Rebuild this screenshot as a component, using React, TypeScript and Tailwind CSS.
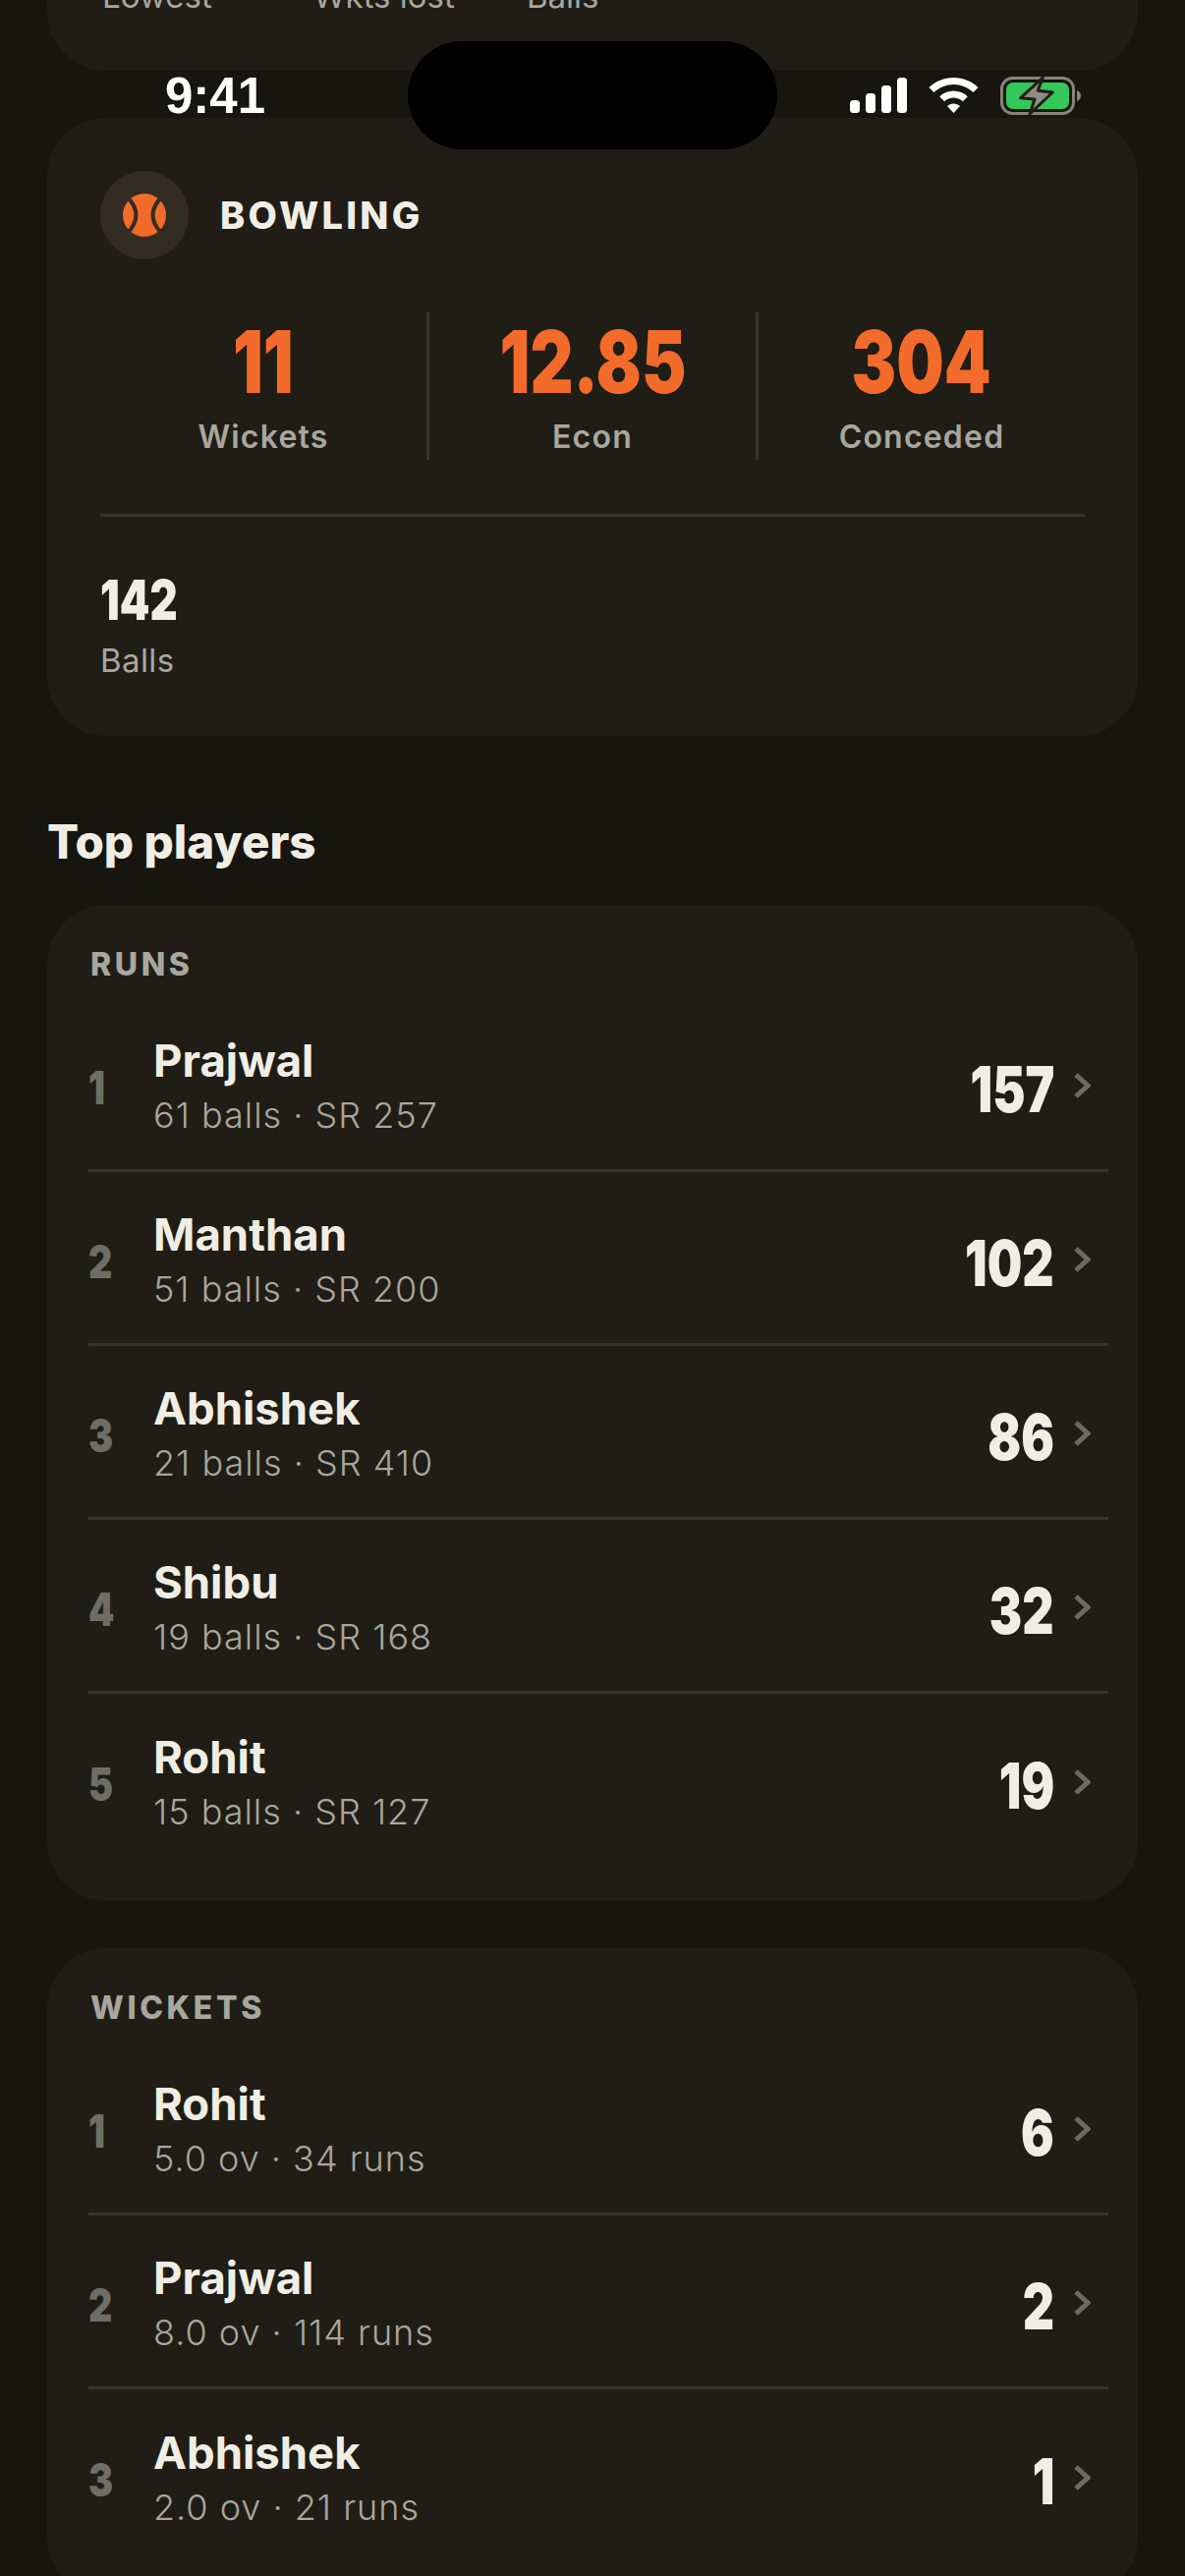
const runs = [
  { name: "Prajwal", sub: "61 balls · SR 257", score: "157" },
  { name: "Manthan", sub: "51 balls · SR 200", score: "102" },
  { name: "Abhishek", sub: "21 balls · SR 410", score: "86" },
  { name: "Shibu", sub: "19 balls · SR 168", score: "32" },
  { name: "Rohit", sub: "15 balls · SR 127", score: "19" },
];

const wickets = [
  { name: "Rohit", sub: "5.0 ov · 34 runs", score: "6" },
  { name: "Prajwal", sub: "8.0 ov · 114 runs", score: "2" },
  { name: "Abhishek", sub: "2.0 ov · 21 runs", score: "1" },
];

const bowling = [
  { value: "11", label: "Wickets" },
  { value: "12.85", label: "Econ" },
  { value: "304", label: "Conceded" },
];

function StatusBar() {
  return (
    <div className="absolute inset-x-0 top-0 h-[152px]">
      <div className="absolute left-[415px] top-[42px] h-[110px] w-[376px] rounded-[55px] bg-black" />
      <span className="absolute left-[168px] top-[68px] text-[51px] leading-[60px] font-semibold text-white font-['Liberation_Sans',sans-serif]">
        9:41
      </span>
      {/* signal */}
      <svg className="absolute left-[865px] top-[79px]" width="58" height="36" viewBox="0 0 58 36" fill="#fff">
        <rect x="0" y="23" width="10" height="13" rx="3.5" />
        <rect x="16" y="16" width="10" height="20" rx="3.5" />
        <rect x="32" y="8" width="10" height="28" rx="3.5" />
        <rect x="48" y="0" width="10" height="36" rx="3.5" />
      </svg>
      {/* wifi */}
      <svg className="absolute left-[945px] top-[79px]" width="51" height="36" viewBox="0 0 51 36" fill="#fff">
        <path d="M25.5 0C35 0 44 3.7 50.5 10L45.5 15C40.2 10 33 7 25.5 7S10.8 10 5.5 15L.5 10C7 3.7 16 0 25.5 0Z" />
        <path d="M25.5 13.5C31 13.5 36 15.6 39.8 19.2L34.8 24.2C32.3 22 29 20.6 25.5 20.6S18.7 22 16.2 24.2L11.2 19.2C15 15.6 20 13.5 25.5 13.5Z" />
        <path d="M25.5 26.5C28 26.5 30.3 27.4 32 29L25.5 36L19 29C20.7 27.4 23 26.5 25.5 26.5Z" />
      </svg>
      {/* battery charging */}
      <svg className="absolute left-[1018px] top-[78px]" width="84" height="40" viewBox="0 0 84 40">
        <rect x="1.5" y="1.5" width="73" height="36" rx="11" fill="none" stroke="#85847c" strokeWidth="3" />
        <rect x="6" y="6" width="64" height="27" rx="7" fill="#34c759" />
        <path d="M78 14C81 15 82 17 82 19.5S81 24 78 25Z" fill="#85847c" />
        <path d="M43.3 1L20.7 21.7L35 23L30 38L53.3 16L38.3 14.3Z" fill="#8d8c84" stroke="#1f1d16" strokeWidth="3" strokeLinejoin="round" />
      </svg>
    </div>
  );
}

function BallIcon() {
  return (
    <div className="flex h-[90px] w-[90px] items-center justify-center rounded-full bg-[#332c22]">
      <svg width="44" height="44" viewBox="0 0 44 44" fill="none">
        <circle cx="22" cy="22" r="22" fill="#f26b2a" />
        <path d="M4 3Q23 22 4 41M40 3Q21 22 40 41" stroke="#332c22" strokeWidth="4" />
      </svg>
    </div>
  );
}

function PlayerCard({ title, rows, className = "" }: { title: string; rows: typeof runs; className?: string }) {
  return (
    <div className={`rounded-[60px] bg-[#1f1d16] pt-[41px] pr-[30px] pb-[34px] pl-[42px] ${className}`}>
      <div className="mb-[14px] pl-[2px] text-[32px] leading-[40px] font-extrabold tracking-[3.6px] text-[#a8a79d]">{title}</div>
      {rows.map((row, i) => (
        <div
          key={row.name}
          className={`flex h-[177px] items-center ${i < rows.length - 1 ? "border-b-[3px] border-[#37352a]" : ""}`}
        >
          <div className="w-[66px] pt-[6px]">
            <span className="inline-block origin-left scale-x-[.8] text-[47px] leading-none font-black text-[#6e6e66]">
              {i + 1}
            </span>
          </div>
          <div className="min-w-0 flex-1 pt-[5px]">
            <div className="text-[45.5px] leading-[56px] font-bold text-[#f0eee4]">{row.name}</div>
            <div className="mt-[2px] text-[36px] leading-[50px] font-light tracking-[1px] text-[#a8a79d]">{row.sub}</div>
          </div>
          <span className="inline-block origin-right scale-x-[.77] pt-[10px] text-[65px] leading-none font-black text-[#f0eee4]">
            {row.score}
          </span>
          <svg className="mt-[3px] mr-[18px] ml-[20px]" width="17" height="26" viewBox="0 0 17 26" fill="none">
            <path d="M2 2L14 13L2 24" stroke="#6b6b63" strokeWidth="5" />
          </svg>
        </div>
      ))}
    </div>
  );
}

export default function App() {
  return (
    <div className="relative h-[2622px] w-[1206px] overflow-hidden bg-[#16150f] font-['Inter',sans-serif]">
      <div className="mx-[48px] flex h-[72px] items-start overflow-hidden rounded-b-[60px] bg-[#1f1d16] pl-[56px]">
        <span className="-mt-[24px] w-[215px] text-[33px] leading-[40px] text-[#a8a79d]">Lowest</span>
        <span className="-mt-[24px] w-[217px] text-[33px] leading-[40px] text-[#a8a79d]">Wkts lost</span>
        <span className="-mt-[24px] text-[33px] leading-[40px] text-[#a8a79d]">Balls</span>
      </div>

      <div className="mx-[48px] mt-[48px] h-[629px] rounded-[60px] bg-[#1f1d16] px-[54px] pt-[54px]">
        <div className="flex items-center gap-[32px]">
          <BallIcon />
          <span className="text-[38px] font-extrabold tracking-[3.3px] text-[#f0eee4]">BOWLING</span>
        </div>
        <div className="mt-[54px] grid h-[150px] grid-cols-[335px_335px_1fr]">
          {bowling.map((stat, i) => (
            <div
              key={stat.label}
              className={`flex flex-col items-center ${i < 2 ? "border-r-[3px] border-[#37352a]" : ""}`}
            >
              <span className="mt-[4px] inline-block scale-x-[.775] text-[88px] leading-[92px] font-black text-[#f26b2a]">
                {stat.value}
              </span>
              <span className="mt-[11px] text-[32px] leading-[40px] font-semibold tracking-[1.2px] text-[#a8a79d]">
                {stat.label}
              </span>
            </div>
          ))}
        </div>
        <div className="mt-[55px] h-[3px] bg-[#37352a]" />
        <div className="mt-[52px] text-[56px] leading-[66px]">
          <span className="inline-block origin-left scale-x-[.78] font-black text-[#f0eee4]">142</span>
        </div>
        <div className="mt-[8px] text-[33px] leading-[40px] tracking-[.4px] text-[#a8a79d]">Balls</div>
      </div>

      <h2 className="mx-[48px] mt-[78px] text-[47.5px] leading-[60px] font-extrabold text-[#f0eee4]">Top players</h2>

      <PlayerCard title="RUNS" rows={runs} className="mx-[48px] mt-[34px]" />
      <PlayerCard title="WICKETS" rows={wickets} className="mx-[48px] mt-[48px]" />

      <StatusBar />
    </div>
  );
}
